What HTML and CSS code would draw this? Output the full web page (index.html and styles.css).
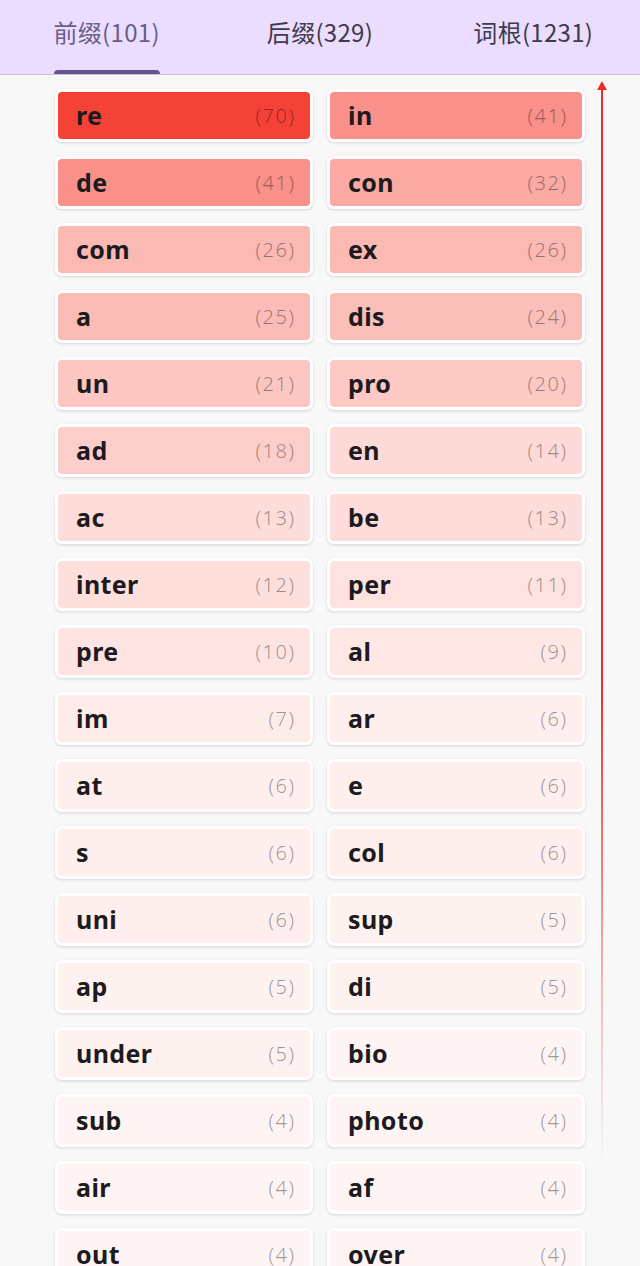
FILE: index.html
```html
<!DOCTYPE html>
<html lang="zh">
<head>
<meta charset="utf-8">
<title>词缀</title>
<link rel="stylesheet" href="styles.css">
</head>
<body>
<header class="tabs">
  <div class="tab active"><span class="tab-label">前缀(101)</span></div>
  <div class="tab"><span class="tab-label">后缀(329)</span></div>
  <div class="tab"><span class="tab-label">词根(1231)</span></div>
</header>
<main class="content">
  <div class="grid">
    <div class="card"><div class="inner" style="background: rgba(244,67,54,1)"><span class="word">re</span><span class="count">(70)</span></div></div>
    <div class="card"><div class="inner" style="background: rgba(244,67,54,0.586)"><span class="word">in</span><span class="count">(41)</span></div></div>
    <div class="card"><div class="inner" style="background: rgba(244,67,54,0.586)"><span class="word">de</span><span class="count">(41)</span></div></div>
    <div class="card"><div class="inner" style="background: rgba(244,67,54,0.457)"><span class="word">con</span><span class="count">(32)</span></div></div>
    <div class="card"><div class="inner" style="background: rgba(244,67,54,0.371)"><span class="word">com</span><span class="count">(26)</span></div></div>
    <div class="card"><div class="inner" style="background: rgba(244,67,54,0.371)"><span class="word">ex</span><span class="count">(26)</span></div></div>
    <div class="card"><div class="inner" style="background: rgba(244,67,54,0.357)"><span class="word">a</span><span class="count">(25)</span></div></div>
    <div class="card"><div class="inner" style="background: rgba(244,67,54,0.343)"><span class="word">dis</span><span class="count">(24)</span></div></div>
    <div class="card"><div class="inner" style="background: rgba(244,67,54,0.3)"><span class="word">un</span><span class="count">(21)</span></div></div>
    <div class="card"><div class="inner" style="background: rgba(244,67,54,0.286)"><span class="word">pro</span><span class="count">(20)</span></div></div>
    <div class="card"><div class="inner" style="background: rgba(244,67,54,0.257)"><span class="word">ad</span><span class="count">(18)</span></div></div>
    <div class="card"><div class="inner" style="background: rgba(244,67,54,0.2)"><span class="word">en</span><span class="count">(14)</span></div></div>
    <div class="card"><div class="inner" style="background: rgba(244,67,54,0.186)"><span class="word">ac</span><span class="count">(13)</span></div></div>
    <div class="card"><div class="inner" style="background: rgba(244,67,54,0.186)"><span class="word">be</span><span class="count">(13)</span></div></div>
    <div class="card"><div class="inner" style="background: rgba(244,67,54,0.171)"><span class="word">inter</span><span class="count">(12)</span></div></div>
    <div class="card"><div class="inner" style="background: rgba(244,67,54,0.157)"><span class="word">per</span><span class="count">(11)</span></div></div>
    <div class="card"><div class="inner" style="background: rgba(244,67,54,0.143)"><span class="word">pre</span><span class="count">(10)</span></div></div>
    <div class="card"><div class="inner" style="background: rgba(244,67,54,0.129)"><span class="word">al</span><span class="count">(9)</span></div></div>
    <div class="card"><div class="inner" style="background: rgba(244,67,54,0.1)"><span class="word">im</span><span class="count">(7)</span></div></div>
    <div class="card"><div class="inner" style="background: rgba(244,67,54,0.086)"><span class="word">ar</span><span class="count">(6)</span></div></div>
    <div class="card"><div class="inner" style="background: rgba(244,67,54,0.086)"><span class="word">at</span><span class="count">(6)</span></div></div>
    <div class="card"><div class="inner" style="background: rgba(244,67,54,0.086)"><span class="word">e</span><span class="count">(6)</span></div></div>
    <div class="card"><div class="inner" style="background: rgba(244,67,54,0.086)"><span class="word">s</span><span class="count">(6)</span></div></div>
    <div class="card"><div class="inner" style="background: rgba(244,67,54,0.086)"><span class="word">col</span><span class="count">(6)</span></div></div>
    <div class="card"><div class="inner" style="background: rgba(244,67,54,0.086)"><span class="word">uni</span><span class="count">(6)</span></div></div>
    <div class="card"><div class="inner" style="background: rgba(244,67,54,0.071)"><span class="word">sup</span><span class="count">(5)</span></div></div>
    <div class="card"><div class="inner" style="background: rgba(244,67,54,0.071)"><span class="word">ap</span><span class="count">(5)</span></div></div>
    <div class="card"><div class="inner" style="background: rgba(244,67,54,0.071)"><span class="word">di</span><span class="count">(5)</span></div></div>
    <div class="card"><div class="inner" style="background: rgba(244,67,54,0.071)"><span class="word">under</span><span class="count">(5)</span></div></div>
    <div class="card"><div class="inner" style="background: rgba(244,67,54,0.057)"><span class="word">bio</span><span class="count">(4)</span></div></div>
    <div class="card"><div class="inner" style="background: rgba(244,67,54,0.057)"><span class="word">sub</span><span class="count">(4)</span></div></div>
    <div class="card"><div class="inner" style="background: rgba(244,67,54,0.057)"><span class="word">photo</span><span class="count">(4)</span></div></div>
    <div class="card"><div class="inner" style="background: rgba(244,67,54,0.057)"><span class="word">air</span><span class="count">(4)</span></div></div>
    <div class="card"><div class="inner" style="background: rgba(244,67,54,0.057)"><span class="word">af</span><span class="count">(4)</span></div></div>
    <div class="card"><div class="inner" style="background: rgba(244,67,54,0.057)"><span class="word">out</span><span class="count">(4)</span></div></div>
    <div class="card"><div class="inner" style="background: rgba(244,67,54,0.057)"><span class="word">over</span><span class="count">(4)</span></div></div>
  </div>
  <div class="scroll-line" aria-hidden="true"><div class="arrow-head"></div></div>
</main>
</body>
</html>
```

FILE: styles.css
```css
html, body {
  margin: 0;
  padding: 0;
}
body {
  width: 640px;
  height: 1266px;
  overflow: hidden;
  background: #f8f8f8;
  font-family: "Noto Sans", "Noto Sans CJK SC", sans-serif;
  color: #1d1b20;
}
.tabs {
  height: 74px;
  display: flex;
  background: #eaddff;
  border-bottom: 1px solid #cac3d3;
  box-sizing: content-box;
}
.tab {
  flex: 1;
  display: flex;
  justify-content: center;
  align-items: stretch;
}
.tab-label {
  position: relative;
  display: flex;
  align-items: flex-start;
  padding-top: 14px;
  font-family: "Noto Sans CJK SC", "Noto Sans", sans-serif;
  font-size: 24px;
  line-height: 36px;
  letter-spacing: 0.3px;
  color: #403a4c;
}
.tab.active .tab-label {
  color: #6a5e88;
}
.tab.active .tab-label::after {
  content: "";
  position: absolute;
  left: 0;
  right: 0;
  bottom: 0;
  height: 4px;
  background: #625590;
  border-radius: 4px 4px 0 0;
}
.content {
  position: relative;
  padding: 14px 0 0 55px;
}
.grid {
  display: grid;
  grid-template-columns: 258px 258px;
  column-gap: 14px;
  row-gap: 14px;
}
.card {
  height: 53px;
  box-sizing: border-box;
  padding: 3px;
  background: #ffffff;
  border-radius: 7px;
  box-shadow: 0 1px 3px rgba(0, 0, 0, 0.14);
}
.inner {
  height: 100%;
  box-sizing: border-box;
  border-radius: 4px;
  display: flex;
  align-items: center;
  justify-content: space-between;
  padding: 0 16px 0 18px;
}
.word {
  font-size: 25px;
  font-weight: 700;
  letter-spacing: 0.4px;
  color: #1d1b20;
  line-height: 1;
}
.count {
  font-size: 20px;
  font-weight: 300;
  color: rgba(0, 0, 0, 0.38);
  letter-spacing: 1.5px;
  margin-right: -1.5px;
  line-height: 1;
}
.scroll-line {
  position: absolute;
  left: 601px;
  top: 8px;
  width: 2px;
  height: 1085px;
  background: linear-gradient(to bottom, #f02a24 0%, #f02a24 55%, rgba(240, 42, 36, 0.35) 82%, rgba(240, 42, 36, 0) 100%);
}
.arrow-head {
  position: absolute;
  left: -4px;
  top: -2px;
  width: 0;
  height: 0;
  border-left: 5px solid transparent;
  border-right: 5px solid transparent;
  border-bottom: 9px solid #f02a24;
}
```
